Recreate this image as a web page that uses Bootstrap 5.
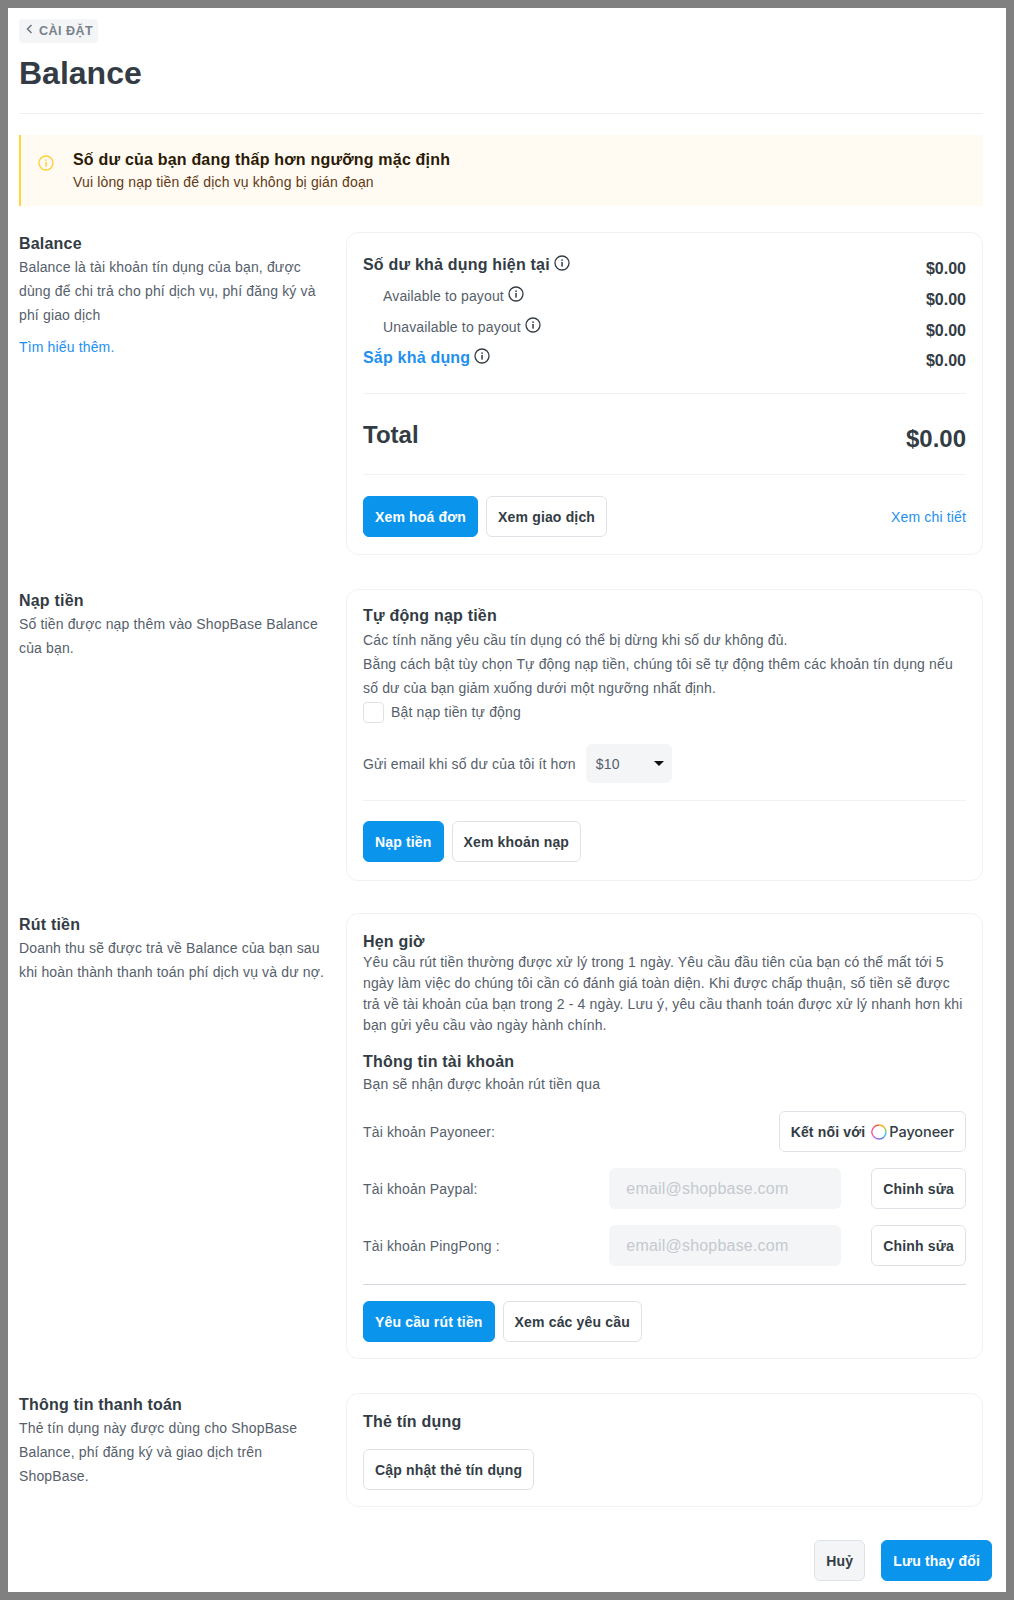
<!DOCTYPE html>
<html lang="vi">
<head>
  <meta charset="UTF-8">
  <title>Balance</title>
  <link href="https://cdn.jsdelivr.net/npm/bootstrap@5.3.0/dist/css/bootstrap.min.css" rel="stylesheet">
  <style>
    html, body { height: 1600px; overflow: hidden; }
    body { background: #808080; padding: 8px; font-family: "Liberation Sans", Arial, sans-serif; font-size: 14px; line-height: 24px; letter-spacing: .15px; color: #56606b; }
    .khung { background: #fff; height: 1584px; padding: 11px 11px 0; position: relative; }
    .nut-back { display: flex; width: fit-content; align-items: center; gap: 6px; height: 24px; padding: 0 5px 0 7px; background: #f4f5f7; border-radius: 4px; color: #79818a; font-size: 12.5px; font-weight: 700; letter-spacing: .5px; text-decoration: none; }
    .nut-back svg { margin-top: -4px; }
    .tieu-de { font-size: 32px; line-height: 40px; font-weight: 700; letter-spacing: 0; color: #333c44; margin: 10px 0 0; }
    .ke-dau { height: 1px; background: #eef0f2; margin: 20px 0 21px; width: 964px; }
    .canh-bao { width: 964px; height: 71px; background: #fffbf2; border-left: 2px solid #ffd43a; color: #5f3a14; display: flex; padding: 13px 0 0 17px; margin-bottom: 26px; line-height: 23px; }
    .canh-bao b { display: block; color: #2b1a05; font-size: 16px; letter-spacing: .2px; }
    .canh-bao svg { margin: 7px 19px 0 0; flex: none; }
    .hang { display: flex; width: 964px; margin-bottom: 34px; }
    .cot-trai { width: 327px; padding-right: 15px; flex: none; }
    .cot-trai h6, .tieu-the { font-size: 16px; line-height: 24px; font-weight: 700; letter-spacing: .2px; color: #333c44; margin: 0; }
    .cot-trai h6 { line-height: 23px; }
    .tim-hieu { margin-top: 8px; }
    .xanh { color: #1e90f0; text-decoration: none; }
    .the { width: 637px; border: 1px solid #f1f2f4; border-radius: 12px; padding: 16px; }
    .nut { display: inline-flex; align-items: center; height: 41px; padding: 0 11px; font-size: 14px; font-weight: 700; letter-spacing: .16px; color: #333c44; background: #fff; border: 1px solid #dfe3e8; border-radius: 6px; white-space: nowrap; }
    .nut-xanh { background: #0a94ec; border-color: #0a94ec; color: #fff; }
    .nut-xam { background: #f4f5f7; }
    .dong-tien { display: flex; justify-content: space-between; }
    .dong-tien b { color: #333c44; font-size: 16px; letter-spacing: 0; margin-top: 4px; }
    .dong-tien svg { margin-left: 4px; vertical-align: -1px; color: #333c44; }
    .thut { padding-left: 20px; }
    .ke { height: 1px; background: #f1f2f4; }
    .o-tong { font-size: 24px; font-weight: 700; letter-spacing: 0; color: #333c44; line-height: 30px; height: 80px; }
    .o-tong span { margin-top: 2px; }
    .o-tong span + span { margin-top: 10px; }
    .o-chon { width: 86px; height: 39px; background: #f4f5f7; border-radius: 6px; display: flex; align-items: center; justify-content: space-between; padding: 0 8px 0 10px; color: #56606b; }
    .tam-giac { width: 0; height: 0; border: 5px solid transparent; border-top-color: #111; border-bottom: 0; }
    .o-check { width: 21px; height: 21px; border: 1px solid #dfe3e8; border-radius: 4px; flex: none; background: #fff; }
    .o-email { width: 232px; height: 41px; background: #f4f5f7; border-radius: 6px; color: #c4c9cf; font-size: 16px; letter-spacing: .2px; display: flex; align-items: center; padding-left: 17px; }
    .dong-tk { display: flex; align-items: center; height: 41px; margin-bottom: 16px; }
    .dong-tk .nhan { flex: 1; }
    .dong-tk .nut { margin-left: 30px; }
    .payo { font-family: "Inter", "Liberation Sans", sans-serif; font-weight: 500; font-size: 14.5px; letter-spacing: -.1px; margin-left: 2px; }
    .chan-trang { position: absolute; right: 14px; top: 1532px; display: flex; gap: 16px; }
    .the-nap { padding-top: 14px; padding-bottom: 18px; }
    .the-tien { padding-top: 20px; padding-bottom: 17px; }
    .ke-tien { margin-top: 17px; }
    .sap-kha { padding-top: 1px; }
    .hang-rut { margin-bottom: 34px; }
    .hang-nap { margin-bottom: 32px; }
    .the-gio { padding-top: 17px; }
    .the-gio .tieu-dau { line-height: 21px; }
    .doan-gio { line-height: 21px; }
    .tieu-tk { margin-top: 16px; line-height: 20px; }
    .phu-tk { margin-bottom: 15px; }
    .ke-dam { height: 1px; background: #d3d8de; margin: 18px 0 16px; }
    .the-tin { padding-top: 16px; }
    .tieu-tin { margin-bottom: 15px; }
    .vong-payo { margin-left: 6px; }
  </style>
</head>
<body>
<svg width="0" height="0" class="position-absolute">
  <symbol id="i-info" viewBox="0 0 16 16">
    <circle cx="8" cy="8" r="7" fill="none" stroke="currentColor" stroke-width="1.3"/>
    <rect x="7.3" y="7" width="1.5" height="4.6" fill="currentColor"/>
    <rect x="7.3" y="4.4" width="1.5" height="1.5" fill="currentColor"/>
  </symbol>
</svg>
<div class="khung">
  <a class="nut-back" href="#">
    <svg width="7" height="10" viewBox="0 0 7 10"><path d="M5.5 1 1.5 5l4 4" fill="none" stroke="#6c7580" stroke-width="1.5"/></svg>
    CÀI ĐẶT
  </a>
  <h1 class="tieu-de">Balance</h1>
  <div class="ke-dau"></div>

  <div class="canh-bao">
    <svg width="16" height="16" style="color:#ffcf33"><use href="#i-info"/></svg>
    <div><b>Số dư của bạn đang thấp hơn ngưỡng mặc định</b>Vui lòng nạp tiền để dịch vụ không bị gián đoạn</div>
  </div>

  <div class="hang">
    <div class="cot-trai">
      <h6>Balance</h6>
      <div>Balance là tài khoản tín dụng của bạn, được dùng để chi trả cho phí dịch vụ, phí đăng ký và phí giao dịch</div>
      <a class="xanh d-block tim-hieu" href="#">Tìm hiểu thêm.</a>
    </div>
    <div class="the the-tien">
      <div class="dong-tien" style="height:31px"><span class="tieu-the">Số dư khả dụng hiện tại<svg width="16" height="16" class="ms-1"><use href="#i-info"/></svg></span><b>$0.00</b></div>
      <div class="dong-tien thut" style="height:31px"><span>Available to payout<svg width="16" height="16"><use href="#i-info"/></svg></span><b>$0.00</b></div>
      <div class="dong-tien thut" style="height:30px"><span>Unavailable to payout<svg width="16" height="16"><use href="#i-info"/></svg></span><b>$0.00</b></div>
      <div class="dong-tien" style="height:31px"><span class="tieu-the xanh sap-kha">Sắp khả dụng<svg width="16" height="16" class="ms-1"><use href="#i-info"/></svg></span><b>$0.00</b></div>
      <div class="ke ke-tien"></div>
      <div class="dong-tien o-tong align-items-center"><span>Total</span><span>$0.00</span></div>
      <div class="ke"></div>
      <div class="d-flex align-items-center gap-2" style="margin-top:21px">
        <span class="nut nut-xanh">Xem hoá đơn</span>
        <span class="nut">Xem giao dịch</span>
        <a class="xanh ms-auto" href="#">Xem chi tiết</a>
      </div>
    </div>
  </div>

  <div class="hang hang-nap">
    <div class="cot-trai">
      <h6>Nạp tiền</h6>
      <div>Số tiền được nạp thêm vào ShopBase Balance của bạn.</div>
    </div>
    <div class="the the-nap">
      <div class="tieu-the">Tự động nạp tiền</div>
      <div>Các tính năng yêu cầu tín dụng có thể bị dừng khi số dư không đủ.<br>Bằng cách bật tùy chọn Tự động nạp tiền, chúng tôi sẽ tự động thêm các khoản tín dụng nếu số dư của bạn giảm xuống dưới một ngưỡng nhất định.</div>
      <div class="d-flex align-items-center" style="gap:7px"><span class="o-check"></span><span>Bật nạp tiền tự động</span></div>
      <div class="d-flex align-items-center" style="margin-top:20px;gap:10px">
        <span>Gửi email khi số dư của tôi ít hơn</span>
        <span class="o-chon">$10<span class="tam-giac"></span></span>
      </div>
      <div class="ke" style="margin:17px 0 20px"></div>
      <div class="d-flex gap-2">
        <span class="nut nut-xanh">Nạp tiền</span>
        <span class="nut">Xem khoản nạp</span>
      </div>
    </div>
  </div>

  <div class="hang hang-rut">
    <div class="cot-trai">
      <h6>Rút tiền</h6>
      <div>Doanh thu sẽ được trả về Balance của bạn sau khi hoàn thành thanh toán phí dịch vụ và dư nợ.</div>
    </div>
    <div class="the the-gio">
      <div class="tieu-the tieu-dau">Hẹn giờ</div>
      <div class="doan-gio">Yêu cầu rút tiền thường được xử lý trong 1 ngày. Yêu cầu đầu tiên của bạn có thể mất tới 5 ngày làm việc do chúng tôi cần có đánh giá toàn diện. Khi được chấp thuận, số tiền sẽ được trả về tài khoản của bạn trong 2 - 4 ngày. Lưu ý, yêu cầu thanh toán được xử lý nhanh hơn khi bạn gửi yêu cầu vào ngày hành chính.</div>
      <div class="tieu-the tieu-tk">Thông tin tài khoản</div>
      <div class="phu-tk">Bạn sẽ nhận được khoản rút tiền qua</div>
      <div class="dong-tk">
        <span class="nhan">Tài khoản Payoneer:</span>
        <span class="nut">
          Kết nối với
          <svg width="16" height="16" viewBox="0 0 16 16" class="vong-payo">
            <g fill="none" stroke-width="1.4">
              <path d="M2.6 3.5A7 7 0 0 1 8 1" stroke="#f0544f"/>
              <path d="M8 1a7 7 0 0 1 5.6 2.8" stroke="#f7b32b"/>
              <path d="M13.6 3.8A7 7 0 0 1 15 8" stroke="#8fd14f"/>
              <path d="M15 8a7 7 0 0 1-2 4.9" stroke="#3fc4e8"/>
              <path d="M13 12.9A7 7 0 0 1 8 15" stroke="#4f7df0"/>
              <path d="M8 15a7 7 0 0 1-5.6-2.8" stroke="#b65fe8"/>
              <path d="M2.4 12.2A7 7 0 0 1 2.6 3.5" stroke="#f05a9a"/>
            </g>
          </svg>
          <span class="payo">Payoneer</span>
        </span>
      </div>
      <div class="dong-tk">
        <span class="nhan">Tài khoản Paypal:</span>
        <span class="o-email">email@shopbase.com</span>
        <span class="nut">Chỉnh sửa</span>
      </div>
      <div class="dong-tk">
        <span class="nhan">Tài khoản PingPong :</span>
        <span class="o-email">email@shopbase.com</span>
        <span class="nut">Chỉnh sửa</span>
      </div>
      <div class="ke-dam"></div>
      <div class="d-flex gap-2">
        <span class="nut nut-xanh">Yêu cầu rút tiền</span>
        <span class="nut">Xem các yêu cầu</span>
      </div>
    </div>
  </div>

  <div class="hang">
    <div class="cot-trai">
      <h6>Thông tin thanh toán</h6>
      <div>Thẻ tín dụng này được dùng cho ShopBase Balance, phí đăng ký và giao dịch trên ShopBase.</div>
    </div>
    <div class="the the-tin">
      <div class="tieu-the tieu-tin">Thẻ tín dụng</div>
      <span class="nut">Cập nhật thẻ tín dụng</span>
    </div>
  </div>

  <div class="chan-trang">
    <span class="nut nut-xam">Huỷ</span>
    <span class="nut nut-xanh">Lưu thay đổi</span>
  </div>
</div>
<script src="https://cdn.jsdelivr.net/npm/bootstrap@5.3.0/dist/js/bootstrap.bundle.min.js"></script>
</body>
</html>
